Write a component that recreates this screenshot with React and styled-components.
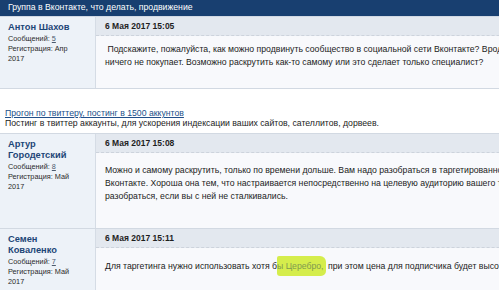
import React from "react";
import styled, { createGlobalStyle } from "styled-components";

const GlobalStyle = createGlobalStyle`
  html, body {
    margin: 0;
    padding: 0;
    background: #ffffff;
    overflow: hidden;
  }
  body {
    font-family: "Liberation Sans", Arial, sans-serif;
    color: #1b1b1b;
  }
`;

const Page = styled.div`
  width: 760px;
`;

const TitleBar = styled.div`
  height: 16px;
  line-height: 15px;
  background: #183f70;
  color: #ffffff;
  font-size: 8.7px;
  padding-left: 8px;
  border-bottom: 1px solid #d0d8e3;
  white-space: nowrap;
`;

const Post = styled.div`
  display: grid;
  grid-template-columns: 96px 1fr;
  min-height: ${(p) => p.$height}px;
  border-bottom: 1px solid #d2d9e2;
`;

const UserCell = styled.div`
  background: #edf2f8;
  border-right: 1px solid #d5dce5;
  padding: 5px 8px 6px 8px;
`;

const UserName = styled.div`
  font-weight: bold;
  font-size: 9.3px;
  line-height: 11px;
  color: #1d4677;
  margin-bottom: 1px;
`;

const Meta = styled.div`
  font-size: 7.3px;
  line-height: 10px;
  color: #2b2b2b;
  width: 72px;
`;

const MetaLink = styled.a`
  color: #4b5a6e;
  text-decoration: underline;
`;

const MessageCell = styled.div`
  background: #f8f9fc;
  display: flex;
  flex-direction: column;
`;

const DateBar = styled.div`
  height: 18px;
  line-height: 18px;
  background: #e3e8ef;
  border-bottom: 1px dashed #cdd3dc;
  padding-left: 9px;
  font-weight: bold;
  font-size: 8.5px;
  color: #1e1e1e;
  white-space: nowrap;
`;

const Body = styled.div`
  padding: ${(p) => p.$top}px 9px 10px 9px;
  font-size: 8.7px;
  line-height: 13px;
  color: #1b1b1b;
`;

const Line = styled.div`
  white-space: nowrap;
`;

const Marker = styled.span`
  background: #d5ed4c;
  color: #7f9a4f;
  padding: 5px 2px 5px 0;
  border-radius: 2px 6px 5px 3px;
`;

const Promo = styled.div`
  background: #ffffff;
  padding: 19px 5px 5px 5px;
  font-size: 8.7px;
  line-height: 10px;
  border-bottom: 1px solid #d2d9e2;
  white-space: nowrap;
`;

const PromoLink = styled.a`
  display: block;
  color: #214f8a;
  text-decoration: underline;
`;

const PromoText = styled.div`
  color: #1b1b1b;
`;

const posts = [
  {
    name: "Антон Шахов",
    count: "5",
    reg: "Апр 2017",
    date: "6 Мая 2017 15:05",
    height: 71,
    top: 7,
    lines: [
      "\u00a0Подскажите, пожалуйста, как можно продвинуть сообщество в социальной сети Вконтакте? Вроде бы все делаю правильно,",
      "ничего не покупает. Возможно раскрутить как-то самому или это сделает только специалист?",
    ],
  },
  {
    name: "Артур Городетский",
    count: "8",
    reg: "Май 2017",
    date: "6 Мая 2017 15:08",
    height: 94,
    top: 11,
    lines: [
      "Можно и самому раскрутить, только по времени дольше. Вам надо разобраться в таргетированной рекламе",
      "Вконтакте. Хороша она тем, что настраивается непосредственно на целевую аудиторию вашего товара.",
      "разобраться, если вы с ней не сталкивались.",
    ],
  },
];

function UserInfo({ name, count, reg }) {
  return (
    <UserCell>
      <UserName>{name}</UserName>
      <Meta>
        Сообщений: <MetaLink href="#">{count}</MetaLink>
      </Meta>
      <Meta>Регистрация: {reg}</Meta>
    </UserCell>
  );
}

export default function App() {
  return (
    <Page>
      <GlobalStyle />
      <TitleBar>Группа в Вконтакте, что делать, продвижение</TitleBar>

      <Post $height={posts[0].height}>
        <UserInfo {...posts[0]} />
        <MessageCell>
          <DateBar>{posts[0].date}</DateBar>
          <Body $top={posts[0].top}>
            {posts[0].lines.map((l, i) => (
              <Line key={i}>{l}</Line>
            ))}
          </Body>
        </MessageCell>
      </Post>

      <Promo>
        <PromoLink href="#">Прогон по твиттеру, постинг в 1500 аккунтов</PromoLink>
        <PromoText>
          Постинг в твиттер аккаунты, для ускорения индексации ваших сайтов, сателлитов, дорвеев.
        </PromoText>
      </Promo>

      <Post $height={posts[1].height}>
        <UserInfo {...posts[1]} />
        <MessageCell>
          <DateBar>{posts[1].date}</DateBar>
          <Body $top={posts[1].top}>
            {posts[1].lines.map((l, i) => (
              <Line key={i}>{l}</Line>
            ))}
          </Body>
        </MessageCell>
      </Post>

      <Post $height={80}>
        <UserInfo name="Семен Коваленко" count="7" reg="Май 2017" />
        <MessageCell>
          <DateBar>6 Мая 2017 15:11</DateBar>
          <Body $top={12}>
            <Line>
              Для таргетинга нужно использовать хотя б<Marker>ы Церебро,</Marker> при этом цена для подписчика будет высокая.
            </Line>
          </Body>
        </MessageCell>
      </Post>
    </Page>
  );
}
